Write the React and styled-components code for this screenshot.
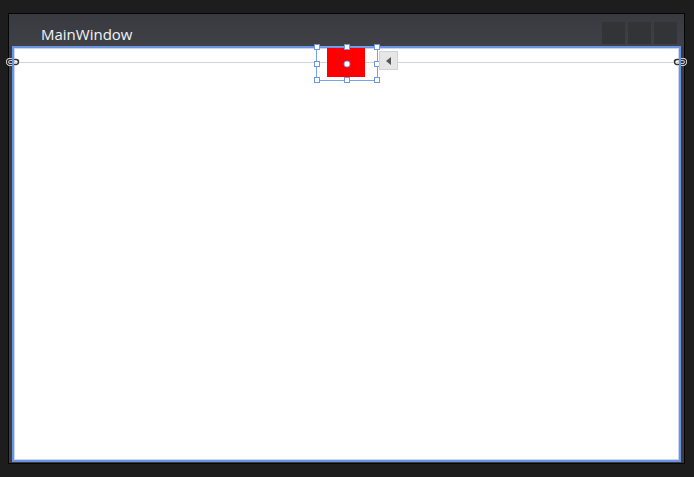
import React from "react";
import styled, { createGlobalStyle } from "styled-components";

const Global = createGlobalStyle`
  html, body {
    margin: 0;
    padding: 0;
    background: #1d1d1d;
    width: 694px;
    height: 477px;
    overflow: hidden;
  }
`;

const Page = styled.div`
  padding: 13px 0 0 8px;
`;

const Window = styled.div`
  box-sizing: border-box;
  width: 677px;
  height: 451px;
  border: 1px solid #050505;
  background: linear-gradient(#393a3f, #404146 32px, #3c3d42 33px);
  display: flex;
  flex-direction: column;
  padding: 0 3px 1px 3px;
`;

const TitleBar = styled.div`
  height: 32px;
  flex: none;
  display: flex;
  align-items: flex-start;
  justify-content: space-between;
`;

const Title = styled.div`
  font-family: "Open Sans", "DejaVu Sans", sans-serif;
  font-size: 15px;
  color: #f0f4fb;
  margin: 10px 0 0 29px;
  line-height: 21px;
`;

const Buttons = styled.div`
  display: flex;
  gap: 3px;
  margin: 8px 4px 0 0;
`;

const WinButton = styled.div`
  width: 23px;
  height: 22px;
  background: #333438;
`;

const Content = styled.div`
  position: relative;
  flex: 1;
  background: #fff;
  border: 2px solid #6a93e2;
  box-shadow: inset 1px 1px 0 #c9d6ef, inset -1px -1px 0 #c9d6ef;
`;

const Guide = styled.div`
  position: absolute;
  left: 0;
  right: 0;
  top: 14px;
  height: 1px;
  background: #d4d4d4;
`;

const Anchor = styled.svg`
  position: absolute;
  top: 10px;
  left: ${(p) => p.$x}px;
`;

const RedBox = styled.div`
  position: absolute;
  left: 313px;
  top: 0px;
  width: 38px;
  height: 29px;
  background: #ff0000;
`;

const Selection = styled.div`
  position: absolute;
  left: 302px;
  top: -2px;
  width: 60px;
  height: 33px;
  border: 1px solid #7aa2ea;
`;

const Handle = styled.div`
  position: absolute;
  width: 4px;
  height: 4px;
  background: #fff;
  border: 1px solid #6e98e6;
  left: ${(p) => p.$x}%;
  top: ${(p) => p.$y}%;
  transform: translate(-50%, -50%);
`;

const Dot = styled.div`
  position: absolute;
  left: 50%;
  top: 50%;
  width: 5px;
  height: 5px;
  border-radius: 50%;
  background: #fff;
  border: 1px solid #7aa2ea;
  transform: translate(-50%, -50%);
`;

const ArrowButton = styled.div`
  position: absolute;
  left: 365px;
  top: 3px;
  width: 17px;
  height: 17px;
  background: #e6e6e6;
  border: 1px solid #d2d2d2;
  display: flex;
  align-items: center;
  justify-content: center;
`;

const handles = [
  [0, 0], [50, 0], [100, 0],
  [0, 50], [100, 50],
  [0, 100], [50, 100], [100, 100],
];

function AnchorIcon({ x }) {
  return (
    <Anchor $x={x} width="14" height="8" viewBox="0 0 14 8">
      <path d="M6 1.5H4a2.5 2.5 0 0 0 0 5h2" fill="none" stroke="#fff" strokeWidth="3" />
      <path d="M8 1.5h2a2.5 2.5 0 0 1 0 5H8" fill="none" stroke="#fff" strokeWidth="3" />
      <path d="M6 1.5H4a2.5 2.5 0 0 0 0 5h2" fill="none" stroke="#333" strokeWidth="1.6" />
      <path d="M8 1.5h2a2.5 2.5 0 0 1 0 5H8" fill="none" stroke="#333" strokeWidth="1.6" />
    </Anchor>
  );
}

export default function App() {
  return (
    <Page>
      <Global />
      <Window>
        <TitleBar>
          <Title>MainWindow</Title>
          <Buttons>
            <WinButton />
            <WinButton />
            <WinButton />
          </Buttons>
        </TitleBar>
        <Content>
          <Guide />
          <AnchorIcon x={-8} />
          <AnchorIcon x={659} />
          <RedBox />
          <Selection>
            {handles.map(([x, y], i) => (
              <Handle key={i} $x={x} $y={y} />
            ))}
            <Dot />
          </Selection>
          <ArrowButton>
            <svg width="6" height="8" viewBox="0 0 6 8">
              <path d="M5 0L0 4l5 4z" fill="#555" />
            </svg>
          </ArrowButton>
        </Content>
      </Window>
    </Page>
  );
}
